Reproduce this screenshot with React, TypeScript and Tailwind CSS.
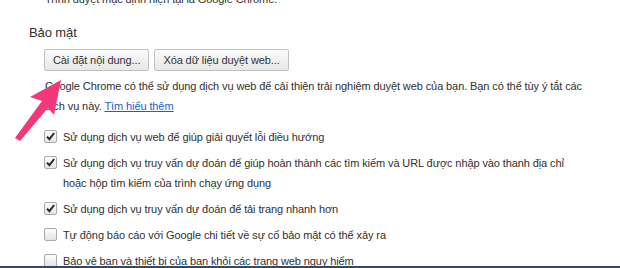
import React from "react";

function Check({ on }: { on?: boolean }) {
  return (
    <span className="mt-[3px] flex h-[13px] w-[13px] shrink-0 items-center justify-center rounded-[2px] border border-[#a9a9a9] bg-gradient-to-b from-[#fdfdfd] to-[#e4e4e4]">
      {on && (
        <svg width="11" height="11" viewBox="0 0 11 11">
          <path d="M2 5.6 L4.4 8.2 L9.2 2" fill="none" stroke="#2a2a2a" strokeWidth="2" />
        </svg>
      )}
    </span>
  );
}

const rows: { on: boolean; text: string[] }[] = [
  { on: true, text: ["Sử dụng dịch vụ web để giúp giải quyết lỗi điều hướng"] },
  {
    on: true,
    text: [
      "Sử dụng dịch vụ truy vấn dự đoán để giúp hoàn thành các tìm kiếm và URL được nhập vào thanh địa chỉ",
      "hoặc hộp tìm kiếm của trình chạy ứng dụng",
    ],
  },
  { on: true, text: ["Sử dụng dịch vụ truy vấn dự đoán để tải trang nhanh hơn"] },
  { on: false, text: ["Tự động báo cáo với Google chi tiết về sự cố bảo mật có thể xảy ra"] },
  { on: false, text: ["Bảo vệ bạn và thiết bị của bạn khỏi các trang web nguy hiểm"] },
];

export default function App() {
  return (
    <div className="relative h-[268px] w-[620px] overflow-hidden bg-white font-['Liberation_Sans',sans-serif] text-[11px] tracking-[-0.1px] text-[#303030]">
      <div className="flex h-[266px] flex-col overflow-hidden pl-[29px]">
        {/* default browser line, cut off at the top */}
        <p className="-mt-[11px] whitespace-nowrap pl-[16px] leading-[20px]">Trình duyệt mặc định hiện tại là Google Chrome.</p>

        <h2 className="mt-[14px] text-[13px] leading-[20px] text-[#303030]">Bảo mật</h2>

        <div className="mt-[6px] flex gap-[5px] pl-[15px]">
          <button className="h-[22px] rounded-[2px] border border-[#c2c2c2] bg-gradient-to-b from-[#fafafa] to-[#e8e8e8] px-[8px] text-[11px] leading-[20px] text-[#333]">
            Cài đặt nội dung...
          </button>
          <button className="h-[22px] rounded-[2px] border border-[#c2c2c2] bg-gradient-to-b from-[#fafafa] to-[#e8e8e8] px-[8px] text-[11px] leading-[20px] text-[#333]">
            Xóa dữ liệu duyệt web...
          </button>
        </div>

        <div className="mt-[5px] pl-[16px] leading-[20px]">
          <p className="whitespace-nowrap">
            Google Chrome có thể sử dụng dịch vụ web để cải thiện trải nghiệm duyệt web của bạn. Bạn có thể tùy ý tắt các
          </p>
          <p className="whitespace-nowrap">
            dịch vụ này. <a className="text-[#1a5fd0] underline">Tìm hiểu thêm</a>
          </p>
        </div>

        <div className="mt-[11px] flex flex-col gap-[6px] pl-[15px]">
          {rows.map((r, i) => (
            <div key={i} className="flex gap-[6px]">
              <Check on={r.on} />
              <div className="leading-[20px]">
                {r.text.map((t, j) => (
                  <div key={j} className="whitespace-nowrap">
                    {t}
                  </div>
                ))}
              </div>
            </div>
          ))}
        </div>
      </div>
      <div className="h-[2px] bg-[#2f4a68]" />

      {/* pink pointer arrow */}
      <svg className="absolute left-0 top-0" width="80" height="150" viewBox="0 0 80 150">
        <polygon points="61,80 30,97 42,101 15,138 20,141 48,108 54,115" fill="#f2387a" />
      </svg>
    </div>
  );
}
